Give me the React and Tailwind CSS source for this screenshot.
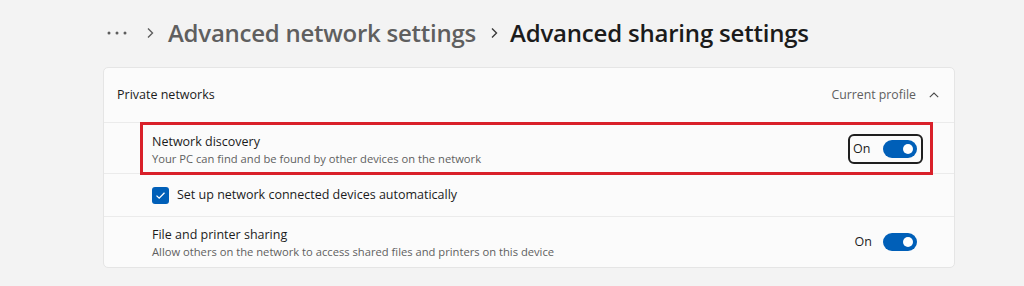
import React from "react";

const Toggle = () => (
  <div className="relative w-[34px] h-[18px] rounded-full bg-[#005fb8]">
    <div className="absolute right-[4px] top-[4px] w-[10px] h-[10px] rounded-full bg-white" />
  </div>
);

const App = () => {
  return (
    <div className="w-[1024px] h-[286px] bg-[#f3f3f3] overflow-hidden font-['Open_Sans',sans-serif]">
      {/* Breadcrumb */}
      <div className="h-[67px] pl-[107px] flex items-center pb-[2px]">
        <svg width="20" height="4" viewBox="0 0 20 4">
          <circle cx="2" cy="2" r="1.5" fill="#5d5d5d" />
          <circle cx="10" cy="2" r="1.5" fill="#5d5d5d" />
          <circle cx="18" cy="2" r="1.5" fill="#5d5d5d" />
        </svg>
        <svg className="ml-[19px] mr-[14px]" width="8" height="12" viewBox="0 0 8 12">
          <path d="M2 1.5 L6.5 6 L2 10.5" fill="none" stroke="#5d5d5d" strokeWidth="1.4" />
        </svg>
        <span className="text-[#5f5f5f] text-[24px] font-semibold tracking-[-0.25px]">Advanced network settings</span>
        <svg className="ml-[14px] mr-[12px]" width="8" height="12" viewBox="0 0 8 12">
          <path d="M2 1.5 L6.5 6 L2 10.5" fill="none" stroke="#3a3a3a" strokeWidth="1.4" />
        </svg>
        <span className="text-[#1b1b1b] text-[24px] font-semibold tracking-[-0.2px]">Advanced sharing settings</span>
      </div>

      {/* Card */}
      <div className="ml-[103px] w-[852px] bg-[#fbfbfb] border border-[#e5e5e5] rounded-[5px] text-[#1b1b1b]">
        {/* Header */}
        <div className="h-[55px] flex items-center justify-between pl-[13px] pr-[15px] border-b border-[#ebebeb]">
          <span className="text-[12.5px]">Private networks</span>
          <div className="flex items-center gap-[13px]">
            <span className="text-[12.3px] text-[#5f5f5f]">Current profile</span>
            <svg width="10" height="6" viewBox="0 0 10 6">
              <path d="M0.8 5.2 L5 1 L9.2 5.2" fill="none" stroke="#4a4a4a" strokeWidth="1.1" />
            </svg>
          </div>
        </div>

        {/* Network discovery (highlighted) */}
        <div className="h-[52px] border-b border-[#ebebeb] pl-[36px] pr-[21px] -mt-[1px]">
          <div className="h-[53px] border-[3px] border-[#d9202a] flex items-center justify-between pl-[9px] pr-[7px] pt-[1px]">
            <div className="flex flex-col">
              <span className="text-[12.5px] leading-[18px]">Network discovery</span>
              <span className="text-[11.2px] leading-[15px] text-[#5f5f5f]">Your PC can find and be found by other devices on the network</span>
            </div>
            <div className="h-[30px] w-[75px] border-2 border-[#1f1f1f] rounded-[6px] flex items-center justify-between pl-[3px] pr-[4px]">
              <span className="text-[12.5px]">On</span>
              <Toggle />
            </div>
          </div>
        </div>

        {/* Checkbox row */}
        <div className="h-[43px] border-b border-[#ebebeb] pl-[48px] flex items-center gap-[8px]">
          <div className="w-[17px] h-[17px] rounded-[3px] bg-[#005fb8] flex items-center justify-center">
            <svg width="11" height="9" viewBox="0 0 11 9">
              <path d="M1.5 4.6 L4.2 7.2 L9.5 1.8" fill="none" stroke="#ffffff" strokeWidth="1.3" />
            </svg>
          </div>
          <span className="text-[12.5px]">Set up network connected devices automatically</span>
        </div>

        {/* File and printer sharing */}
        <div className="h-[50px] pl-[48px] pr-[37px] flex items-center justify-between">
          <div className="flex flex-col">
            <span className="text-[12.5px] leading-[18px]">File and printer sharing</span>
            <span className="text-[11.2px] leading-[15px] text-[#5f5f5f]">Allow others on the network to access shared files and printers on this device</span>
          </div>
          <div className="flex items-center gap-[11px]">
            <span className="text-[12.5px]">On</span>
            <Toggle />
          </div>
        </div>
      </div>
    </div>
  );
};

export default App;
